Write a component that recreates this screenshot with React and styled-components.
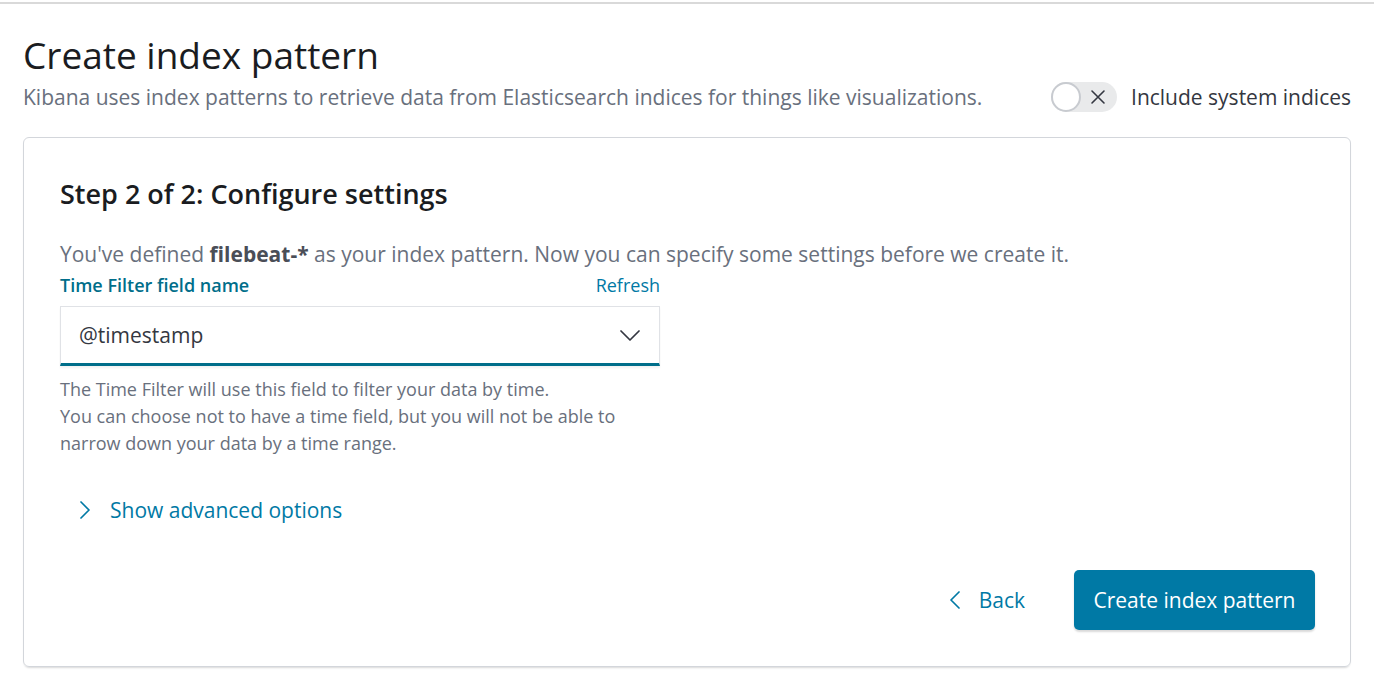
import React, { useState } from "react";
import styled, { createGlobalStyle } from "styled-components";

const GlobalStyle = createGlobalStyle`
  html, body {
    margin: 0;
    padding: 0;
    background: #fff;
    font-family: "Open Sans", "Noto Sans", sans-serif;
    color: #343741;
  }
  * { box-sizing: border-box; }
`;

const Page = styled.div`
  border-top: 2px solid #d9d9d9;
  margin-top: 2px;
  padding: 27px 23px 10px 23px;
`;

const Header = styled.div`
  display: flex;
  align-items: flex-end;
  justify-content: space-between;
  margin-bottom: 25px;
`;

const Title = styled.h1`
  margin: 0;
  font-size: 37px;
  font-weight: 500;
  color: #1a1c21;
  line-height: 48px;
`;

const Subtitle = styled.p`
  margin: 3px 0 0 0;
  font-size: 21px;
  color: #69707d;
  line-height: 30px;
`;

const ToggleWrap = styled.label`
  display: flex;
  align-items: center;
  gap: 14px;
  height: 30px;
  font-size: 21px;
  color: #343741;
  cursor: pointer;
`;

const Track = styled.span`
  position: relative;
  width: 66px;
  height: 30px;
  border-radius: 15px;
  background: ${(p) => (p.$on ? "#0079a5" : "#e9eaeb")};
  display: inline-flex;
  align-items: center;
  justify-content: flex-end;
  padding-right: 11px;
`;

const Knob = styled.span`
  position: absolute;
  left: 0;
  top: 0;
  width: 30px;
  height: 30px;
  border-radius: 50%;
  background: #fff;
  border: 2px solid #c8cbd0;
`;

const Panel = styled.div`
  border: 1px solid #d3d6db;
  border-radius: 6px;
  box-shadow: 0 2px 2px -1px rgba(0, 0, 0, 0.15);
  padding: 38px 35px 36px 36px;
  min-height: 530px;
  display: flex;
  flex-direction: column;
`;

const StepTitle = styled.h2`
  margin: 0 0 27px 0;
  font-size: 27px;
  font-weight: 600;
  color: #1a1c21;
  line-height: 36px;
`;

const Lead = styled.p`
  margin: 0;
  font-size: 21px;
  color: #69707d;
  line-height: 30px;
  b { color: #4a4e57; font-weight: 700; }
`;

const Field = styled.div`
  width: 600px;
  margin-top: 4px;
`;

const LabelRow = styled.div`
  display: flex;
  justify-content: space-between;
  align-items: baseline;
  line-height: 24px;
  margin-bottom: 9px;
`;

const Label = styled.span`
  font-size: 18px;
  font-weight: 600;
  color: #006e8a;
`;

const LinkText = styled.span`
  font-size: 18px;
  color: #0079a5;
`;

const Select = styled.div`
  height: 60px;
  background: #fff;
  border: 1px solid #e0e2e6;
  border-bottom: 3px solid #006e8a;
  display: flex;
  align-items: center;
  justify-content: space-between;
  padding: 0 19px 0 18px;
  font-size: 21px;
  color: #343741;
  box-shadow: 0 2px 2px rgba(0, 0, 0, 0.05);
`;

const Help = styled.div`
  margin-top: 10px;
  font-size: 18px;
  line-height: 27px;
  color: #69707d;
`;

const Advanced = styled.div`
  display: flex;
  align-items: center;
  gap: 20px;
  margin: 38px 0 0 20px;
  font-size: 21px;
  line-height: 30px;
  color: #0079a5;
`;

const Footer = styled.div`
  margin-top: auto;
  display: flex;
  justify-content: flex-end;
  align-items: center;
  gap: 49px;
`;

const BackButton = styled.button`
  display: flex;
  align-items: center;
  gap: 19px;
  background: none;
  border: none;
  font-family: inherit;
  font-size: 21px;
  color: #0079a5;
  padding: 0;
  cursor: pointer;
`;

const PrimaryButton = styled.button`
  height: 60px;
  width: 241px;
  background: #0079a5;
  color: #fff;
  border: none;
  border-radius: 5px;
  font-family: inherit;
  font-size: 21px;
  box-shadow: 0 2px 2px rgba(0, 0, 0, 0.15);
  cursor: pointer;
`;

const Chevron = ({ dir, w, h, color = "currentColor" }) => {
  const paths = {
    down: `M1 1 L${w / 2} ${h - 1} L${w - 1} 1`,
    right: `M1 1 L${w - 1} ${h / 2} L1 ${h - 1}`,
    left: `M${w - 1} 1 L1 ${h / 2} L${w - 1} ${h - 1}`,
  };
  return (
    <svg width={w} height={h} viewBox={`0 0 ${w} ${h}`} fill="none">
      <path d={paths[dir]} stroke={color} strokeWidth="1.7" strokeLinecap="round" strokeLinejoin="round" />
    </svg>
  );
};

const Cross = () => (
  <svg width="16" height="16" viewBox="0 0 16 16" fill="none">
    <path d="M2 2 L14 14 M14 2 L2 14" stroke="#343741" strokeWidth="1.6" strokeLinecap="round" />
  </svg>
);

export default function App() {
  const [system, setSystem] = useState(false);

  return (
    <>
      <GlobalStyle />
      <Page>
        <Header>
          <div>
            <Title>Create index pattern</Title>
            <Subtitle>
              Kibana uses index patterns to retrieve data from Elasticsearch indices for things like visualizations.
            </Subtitle>
          </div>
          <ToggleWrap onClick={() => setSystem(!system)}>
            <Track $on={system}>
              <Knob />
              <Cross />
            </Track>
            Include system indices
          </ToggleWrap>
        </Header>

        <Panel>
          <StepTitle>Step 2 of 2: Configure settings</StepTitle>
          <Lead>
            You've defined <b>filebeat-*</b> as your index pattern. Now you can specify some settings before we create it.
          </Lead>
          <Field>
            <LabelRow>
              <Label>Time Filter field name</Label>
              <LinkText>Refresh</LinkText>
            </LabelRow>
            <Select>
              @timestamp
              <Chevron dir="down" w={20} h={11} color="#343741" />
            </Select>
            <Help>
              The Time Filter will use this field to filter your data by time.
              <br />
              You can choose not to have a time field, but you will not be able to narrow down your data by a time range.
            </Help>
          </Field>
          <Advanced>
            <Chevron dir="right" w={10} h={18} />
            Show advanced options
          </Advanced>
          <Footer>
            <BackButton>
              <Chevron dir="left" w={10} h={18} />
              Back
            </BackButton>
            <PrimaryButton>Create index pattern</PrimaryButton>
          </Footer>
        </Panel>
      </Page>
    </>
  );
}
